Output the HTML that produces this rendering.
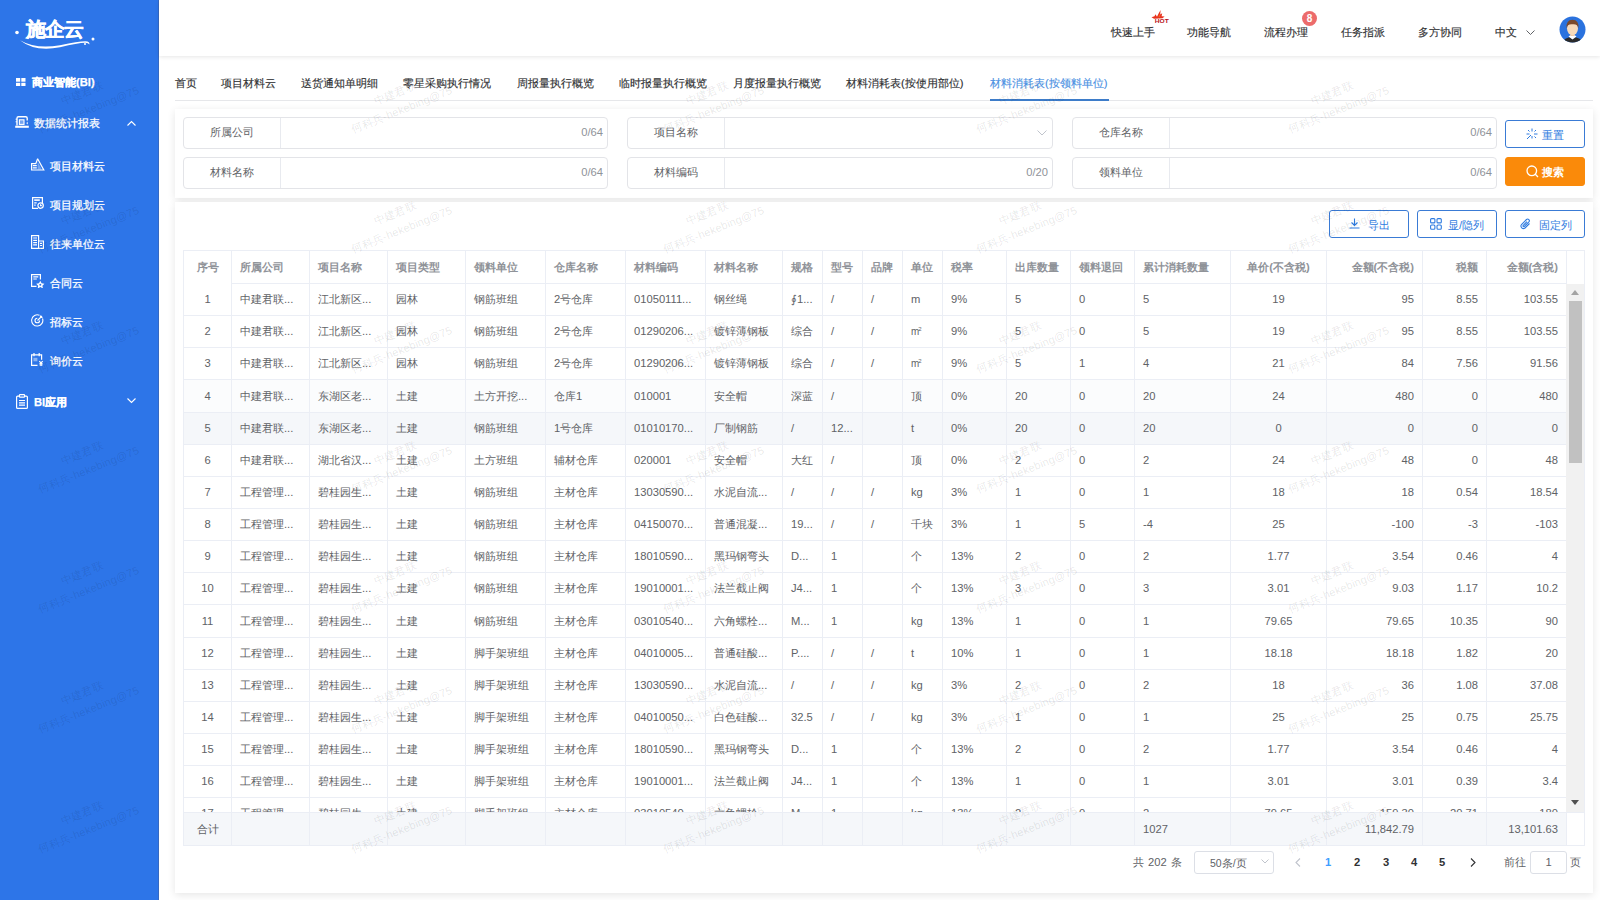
<!DOCTYPE html>
<html><head><meta charset="utf-8">
<style>
*{box-sizing:border-box;margin:0;padding:0}
html,body{width:1600px;height:900px;overflow:hidden;background:#fff;font-family:"Liberation Sans",sans-serif;font-size:11.2px;color:#606266}
.abs{position:absolute}
#side{position:absolute;left:0;top:0;width:159px;height:900px;background:#2d75e8;color:#fff;border-right:1px solid #3669c2}
.mi{position:absolute;white-space:nowrap;line-height:14px;color:#fff;font-size:11.2px;-webkit-text-stroke:0.25px #fff}
.mi svg{position:absolute}
#hdr{position:absolute;left:159px;top:0;width:1441px;height:56px;background:#fff;box-shadow:0 1px 4px rgba(0,0,0,.10);z-index:2}
.hi{position:absolute;top:25px;line-height:14px;color:#303133;white-space:nowrap;-webkit-text-stroke:0.15px currentColor}
#tabs{position:absolute;left:175px;top:64px;width:1418px;height:37px;border-bottom:1px solid #e6e7ea}
.tab{position:absolute;top:12px;line-height:14px;color:#303133;white-space:nowrap;-webkit-text-stroke:0.15px currentColor}
.card{position:absolute;left:175px;width:1418px;background:#fff;box-shadow:0 2px 8px rgba(0,0,0,.10)}
.inp{position:absolute;height:32px;border:1px solid #e3e4e8;border-radius:4px;background:#fff}
.inp .lb{position:absolute;left:0;top:0;height:30px;line-height:28px;text-align:center;color:#606266;letter-spacing:0.3px;text-indent:0.3px;border-right:1px solid #e8eaef}
.inp .ct{position:absolute;top:-0.5px;line-height:28px;color:#909399;right:4px}
.btn{position:absolute;height:28px;border:1px solid #3a7bd5;border-radius:3px;color:#2e7be0;line-height:26px;white-space:nowrap}
.btn svg{position:absolute}
.btn span{position:absolute;top:1px}
#tbl{position:absolute;left:183px;top:250px;width:1402px;height:596px;border:1px solid #ebeef5;background:#fff;overflow:hidden}
.th,.td{position:absolute;top:0;height:100%;border-right:1px solid #ebeef5;padding:0 8px;white-space:nowrap;overflow:hidden}
.th{font-weight:bold;color:#909399;line-height:32px}
.c{text-align:center}.r{text-align:right}.l{text-align:left}
#thead{position:absolute;left:0;top:0;width:1400px;height:33px;background:#fff}
#thead .th{height:33px;border-bottom:1px solid #ebeef5}
#thead .th.first{border-bottom:none}
#tbody{position:absolute;left:0;top:33px;width:1382px;height:528px;overflow:hidden}
.tr{position:absolute;left:0;width:1382px}
.tr .td{border-bottom:1px solid #ebeef5}
#tfoot{position:absolute;left:0;top:561px;width:1400px;height:33px;border-top:1px solid #ebeef5;background:#f5f7fa;line-height:32px}
#sb{position:absolute;left:1382px;top:33px;width:18px;height:528px;background:#f1f1f1}
.wm{position:absolute;width:160px;height:40px;text-align:center;font-size:11px;line-height:18px;color:rgba(0,0,0,0.1);letter-spacing:0.2px;transform:rotate(-22deg);white-space:nowrap}
#wmw{position:absolute;left:0;top:0;width:1600px;height:900px;overflow:hidden;pointer-events:none;z-index:50}
</style></head><body>

<div id="side">
  <svg class="abs" style="left:12px;top:14px" width="90" height="40" viewBox="0 0 90 40">
    <circle cx="5" cy="18.5" r="1.8" fill="#fff"/>
    <circle cx="81" cy="25" r="1.5" fill="#fff"/>
    <circle cx="73" cy="30" r="1" fill="#fff"/>
    <path d="M8 26.2 Q24 35.5 48 31.2 Q67 27.2 73.5 27.3 Q78.2 27.6 77.3 30.6 Q76.6 28.8 73.2 28.7 Q66 28.7 48 33.2 Q23 38.2 8 26.2Z" fill="#fff"/>
  </svg>
  <div class="mi" style="left:26px;top:16px;font-size:20px;line-height:26px;font-weight:bold;letter-spacing:-0.8px;-webkit-text-stroke:0.35px #fff">施企云</div>

  <svg class="abs" style="left:16px;top:77.5px" width="9.5" height="8.5" viewBox="0 0 9.5 8.5"><rect x="0" y="0" width="4.2" height="3.7" fill="#fff"/><rect x="5.3" y="0" width="4.2" height="3.7" fill="#fff"/><rect x="0" y="4.8" width="4.2" height="3.7" fill="#fff"/><rect x="5.3" y="4.8" width="4.2" height="3.7" fill="#fff"/></svg>
  <div class="mi" style="left:32px;top:75px;font-weight:bold">商业智能(BI)</div>

  <svg class="abs" style="left:15px;top:116px" width="14" height="12" viewBox="0 0 14 12" fill="none" stroke="#fff" stroke-width="1.4"><path d="M2 9.6V2.3a1.5 1.5 0 0 1 1.5-1.5h7.2a1.5 1.5 0 0 1 1.5 1.5V4.6"/><rect x="4.4" y="3.8" width="4.6" height="4.6" stroke-width="1.1" fill="rgba(255,255,255,0.35)"/><path d="M12.2 5.6Q13.6 7.4 12.2 8.6Q10.8 7.4 12.2 5.6Z" fill="#fff" stroke="none"/><rect x="0.2" y="9.7" width="13.6" height="2.1" fill="#fff" stroke="none"/><path d="M0.6 3.2h1.4M0.6 5.8h1.4" stroke-width="1"/></svg>
  <div class="mi" style="left:34px;top:116px">数据统计报表</div>
  <svg class="abs" style="left:127px;top:120px" width="9" height="6" viewBox="0 0 9 6"><path d="M0.5 5.5L4.5 1.5L8.5 5.5" stroke="#fff" stroke-width="1.1" fill="none"/></svg>

  <svg class="abs" style="left:31px;top:158px" width="14" height="13" viewBox="0 0 14 13" fill="none" stroke="#fff" stroke-width="1.2"><path d="M6.6 0.8L12.8 12H0.6V5.6h4.2L6.6 0.8"/><path d="M1.8 7.6h4M1.8 9.8h4"/><path d="M6.6 3.5L10.8 11.4H6.6Z" fill="#fff" stroke="none" opacity="0.35"/></svg>
  <div class="mi" style="left:50px;top:159px">项目材料云</div>

  <svg class="abs" style="left:32px;top:197px" width="12" height="12" viewBox="0 0 12 12" fill="none" stroke="#fff" stroke-width="1.2"><path d="M6 11.4H0.6V0.6h9.8V6"/><rect x="2.2" y="2.3" width="5.6" height="1.6" fill="#fff" stroke="none"/><path d="M2.2 5.8h2.5M2.2 8.2h1.5"/><circle cx="8.6" cy="8.6" r="2.7"/><path d="M8.6 7.3v1.4h1.2"/></svg>
  <div class="mi" style="left:50px;top:198px">项目规划云</div>

  <svg class="abs" style="left:31px;top:235px" width="13" height="14" viewBox="0 0 13 14" fill="none" stroke="#fff" stroke-width="1.2"><path d="M0.6 13.4V0.6h7v12.8"/><path d="M7.6 6h4.8v7.4H0"/><path d="M2.2 3h3.8M2.2 5.3h3.8M2.2 7.6h3.8M2.2 9.9h3.8M9 8.3h2M9 10.5h2"/></svg>
  <div class="mi" style="left:50px;top:237px">往来单位云</div>

  <svg class="abs" style="left:31px;top:274px" width="14" height="14" viewBox="0 0 14 14" fill="none" stroke="#fff" stroke-width="1.2"><path d="M5.5 12.4H0.6V0.6h8.8v5"/><path d="M2.3 2.8h5M2.3 5h3.5"/><path d="M9.3 6.8l1.3 2.5 2.8.4-2 2 .5 2.7-2.6-1.3-2.6 1.3.5-2.7-2-2 2.8-.4z" fill="#fff" stroke="none"/><circle cx="9.3" cy="10.8" r="1" fill="#2d75e8" stroke="none"/></svg>
  <div class="mi" style="left:50px;top:276px">合同云</div>

  <svg class="abs" style="left:31px;top:314px" width="13" height="13" viewBox="0 0 13 13" fill="none" stroke="#fff" stroke-width="1.1"><path d="M11.5 4.5A5.6 5.6 0 1 1 8.5 1.3"/><path d="M8.6 6.5A2.3 2.3 0 1 1 6.3 4.2"/><path d="M6.5 6.5L11 2M9.5 1.5v2h2"/></svg>
  <div class="mi" style="left:50px;top:315px">招标云</div>

  <svg class="abs" style="left:31px;top:353px" width="13" height="13" viewBox="0 0 13 13" fill="none" stroke="#fff" stroke-width="1.2"><path d="M6.5 12.4H0.6V1.8h10v5"/><path d="M3 0v3.2M8.2 0v3.2"/><rect x="2.4" y="4.8" width="4" height="3.5" fill="#fff" stroke="none" opacity="0.45"/><path d="M8.3 8.2l1.7 1.8 1.7-1.8M10 10v3M8.5 10.6h3M8.5 12h3"/></svg>
  <div class="mi" style="left:50px;top:354px">询价云</div>

  <svg class="abs" style="left:16px;top:393.5px" width="12" height="15" viewBox="0 0 12 15" fill="none" stroke="#fff" stroke-width="1.2"><path d="M3.4 2.2H1.6a1 1 0 0 0-1 1V13.4a1 1 0 0 0 1 1h8.8a1 1 0 0 0 1-1V3.2a1 1 0 0 0-1-1H8.6"/><rect x="3.4" y="0.6" width="5.2" height="2.6" rx="0.8"/><path d="M3 6.5h6M3 8.8h6M3 11.1h6"/></svg>
  <div class="mi" style="left:34px;top:395px;font-weight:bold">BI应用</div>
  <svg class="abs" style="left:127px;top:398px" width="9" height="6" viewBox="0 0 9 6"><path d="M0.5 0.5L4.5 4.5L8.5 0.5" stroke="#fff" stroke-width="1.1" fill="none"/></svg>
</div>

<div id="hdr">
  <div class="hi" style="left:952px">快速上手</div>
  <svg class="abs" style="left:992px;top:9px" width="20" height="15" viewBox="0 0 20 15"><path d="M0.5 8.3 L3.5 7.2 L4.5 5.2 L6 7.8 L7.6 4.5 L9.6 1 L9.2 5.5 L11.2 4.2 L10.6 7.2 L13.6 7.4 L11.5 9.2 L3 9.8 Z" fill="#e8321e"/><path d="M7.2 8.5 L8.8 5 L9.3 7.5 Z" fill="#f56a1a"/><text x="3.8" y="14" font-size="5.8" font-weight="bold" fill="#b8121b" font-family="Liberation Sans" textLength="14" lengthAdjust="spacingAndGlyphs">HOT</text></svg>
  <div class="hi" style="left:1028px">功能导航</div>
  <div class="hi" style="left:1105px">流程办理</div>
  <div class="abs" style="left:1143px;top:11px;width:15px;height:15px;border-radius:50%;background:#ec6b6b;color:#fff;font-size:10px;line-height:15px;text-align:center;font-weight:bold">8</div>
  <div class="hi" style="left:1182px">任务指派</div>
  <div class="hi" style="left:1259px">多方协同</div>
  <div class="hi" style="left:1336px">中文</div>
  <svg class="abs" style="left:1367px;top:30px" width="9" height="6" viewBox="0 0 9 6"><path d="M0.5 0.5L4.5 4.5L8.5 0.5" stroke="#606266" stroke-width="1" fill="none"/></svg>
  <svg class="abs" style="left:1400px;top:16px" width="27" height="27" viewBox="0 0 27 27">
    <circle cx="13.5" cy="13.5" r="13" fill="#2a72de"/>
    <clipPath id="av"><circle cx="13.5" cy="13.5" r="13"/></clipPath>
    <g clip-path="url(#av)">
      <path d="M3.5 27 Q4.5 21.5 13.5 21 Q22.5 21.5 23.5 27Z" fill="#2a2a2a"/>
      <path d="M9.5 20.6 L13.5 23.6 L17.5 20.6 L15.8 19.2 H11.2Z" fill="#fff"/>
      <rect x="11.5" y="16" width="4" height="4" fill="#f1cba6"/>
      <ellipse cx="13.5" cy="12.6" rx="5.5" ry="6.4" fill="#f7dab9"/>
      <path d="M7.6 12.5 Q6.8 3.8 13.5 3.8 Q20.2 3.8 19.4 12.5 Q18.8 7.6 13.5 8.2 Q8.2 7.6 7.6 12.5Z" fill="#7b4a2c"/>
    </g>
  </svg>
</div>

<div id="tabs">
  <div class="tab" style="left:0px">首页</div>
  <div class="tab" style="left:46px">项目材料云</div>
  <div class="tab" style="left:126px">送货通知单明细</div>
  <div class="tab" style="left:228px">零星采购执行情况</div>
  <div class="tab" style="left:342px">周报量执行概览</div>
  <div class="tab" style="left:444px">临时报量执行概览</div>
  <div class="tab" style="left:558px">月度报量执行概览</div>
  <div class="tab" style="left:671px">材料消耗表(按使用部位)</div>
  <div class="tab" style="left:815px;color:#4a90e2">材料消耗表(按领料单位)</div>
  <div class="abs" style="left:815px;top:35px;width:119px;height:2px;background:#3d7cc9"></div>
</div>

<div class="card" style="top:109px;height:89px"></div>
<div class="inp" style="left:183px;top:117px;width:425px"><div class="lb" style="width:97px">所属公司</div><div class="ct">0/64</div></div>
<div class="inp" style="left:627px;top:117px;width:426px"><div class="lb" style="width:97px">项目名称</div>
  <svg class="abs" style="left:409px;top:12px" width="10" height="6" viewBox="0 0 10 6"><path d="M0.5 0.5L5 5L9.5 0.5" stroke="#c0c4cc" stroke-width="1" fill="none"/></svg></div>
<div class="inp" style="left:1072px;top:117px;width:425px"><div class="lb" style="width:97px">仓库名称</div><div class="ct">0/64</div></div>
<div class="inp" style="left:183px;top:157px;width:425px"><div class="lb" style="width:97px">材料名称</div><div class="ct">0/64</div></div>
<div class="inp" style="left:627px;top:157px;width:426px"><div class="lb" style="width:97px">材料编码</div><div class="ct">0/20</div></div>
<div class="inp" style="left:1072px;top:157px;width:425px"><div class="lb" style="width:97px">领料单位</div><div class="ct">0/64</div></div>

<div class="btn" style="left:1505px;top:120px;width:80px">
  <svg style="left:20px;top:7px" width="12" height="12" viewBox="0 0 12 12" stroke="#2e7be0" stroke-width="1" fill="none"><path d="M6 0.5v3M6 8v2.5M8.5 3.5l1.5-1.5M1 11l4-4M8 6h3.5M0.5 6h3M8.5 8.5l1.5 1.5M2 2l1.5 1.5"/></svg>
  <span style="left:36px">重置</span>
</div>
<div class="btn" style="left:1505px;top:157px;width:80px;background:#fa8a0a;border-color:#fa8a0a;color:#fff;font-weight:bold;height:29px">
  <svg style="left:20px;top:7px" width="13" height="13" viewBox="0 0 13 13" stroke="#fff" stroke-width="1.3" fill="none"><circle cx="5.8" cy="5.8" r="4.8"/><path d="M9.3 9.3L12 12"/></svg>
  <span style="left:36px">搜索</span>
</div>

<div class="card" style="top:202px;height:691px"></div>
<div class="btn" style="left:1329px;top:210px;width:80px">
  <svg style="left:19px;top:7px" width="11" height="11" viewBox="0 0 11 11" stroke="#2e7be0" stroke-width="1.1" fill="none"><path d="M5.5 0.5v7M2.5 4.5l3 3 3-3M0.5 10h10"/></svg>
  <span style="left:38px">导出</span>
</div>
<div class="btn" style="left:1417px;top:210px;width:80px">
  <svg style="left:12px;top:7px" width="12" height="12" viewBox="0 0 12 12" stroke="#2e7be0" stroke-width="1.1" fill="none"><rect x="0.6" y="0.6" width="4.3" height="4.3" rx="1"/><rect x="7" y="0.6" width="4.3" height="4.3" rx="1"/><rect x="0.6" y="7" width="4.3" height="4.3" rx="1"/><rect x="7" y="7" width="4.3" height="4.3" rx="1"/></svg>
  <span style="left:30px">显/隐列</span>
</div>
<div class="btn" style="left:1505px;top:210px;width:80px">
  <svg style="left:14px;top:7px" width="12" height="12" viewBox="0 0 12 12" stroke="#2e7be0" stroke-width="1.1" fill="none"><path d="M9.5 5.5L5 10a2.5 2.5 0 0 1-3.5-3.5L6.5 1.5a1.7 1.7 0 0 1 2.4 2.4L4.2 8.6a0.8 0.8 0 0 1-1.1-1.1L7 3.6"/></svg>
  <span style="left:33px">固定列</span>
</div>

<div id="tbl">
  <div id="thead"><div class="th c first" style="left:0px;width:48px">序号</div><div class="th l" style="left:48px;width:78px">所属公司</div><div class="th l" style="left:126px;width:78px">项目名称</div><div class="th l" style="left:204px;width:78px">项目类型</div><div class="th l" style="left:282px;width:80px">领料单位</div><div class="th l" style="left:362px;width:80px">仓库名称</div><div class="th l" style="left:442px;width:80px">材料编码</div><div class="th l" style="left:522px;width:77px">材料名称</div><div class="th l" style="left:599px;width:40px">规格</div><div class="th l" style="left:639px;width:40px">型号</div><div class="th l" style="left:679px;width:40px">品牌</div><div class="th l" style="left:719px;width:40px">单位</div><div class="th l" style="left:759px;width:64px">税率</div><div class="th l" style="left:823px;width:64px">出库数量</div><div class="th l" style="left:887px;width:64px">领料退回</div><div class="th l" style="left:951px;width:96px">累计消耗数量</div><div class="th c" style="left:1047px;width:96px">单价(不含税)</div><div class="th r" style="left:1143px;width:96px">金额(不含税)</div><div class="th r" style="left:1239px;width:64px">税额</div><div class="th r" style="left:1303px;width:80px">金额(含税)</div></div>
  <div id="tbody"><div class="tr" style="top:0px;height:32px;line-height:31px;"><div class="td c" style="left:0px;width:48px">1</div><div class="td l" style="left:48px;width:78px">中建君联...</div><div class="td l" style="left:126px;width:78px">江北新区...</div><div class="td l" style="left:204px;width:78px">园林</div><div class="td l" style="left:282px;width:80px">钢筋班组</div><div class="td l" style="left:362px;width:80px">2号仓库</div><div class="td l" style="left:442px;width:80px">01050111...</div><div class="td l" style="left:522px;width:77px">钢丝绳</div><div class="td l" style="left:599px;width:40px">∮1...</div><div class="td l" style="left:639px;width:40px">/</div><div class="td l" style="left:679px;width:40px">/</div><div class="td l" style="left:719px;width:40px">m</div><div class="td l" style="left:759px;width:64px">9%</div><div class="td l" style="left:823px;width:64px">5</div><div class="td l" style="left:887px;width:64px">0</div><div class="td l" style="left:951px;width:96px">5</div><div class="td c" style="left:1047px;width:96px">19</div><div class="td r" style="left:1143px;width:96px">95</div><div class="td r" style="left:1239px;width:64px">8.55</div><div class="td r" style="left:1303px;width:80px">103.55</div></div>
<div class="tr" style="top:32px;height:32px;line-height:31px;"><div class="td c" style="left:0px;width:48px">2</div><div class="td l" style="left:48px;width:78px">中建君联...</div><div class="td l" style="left:126px;width:78px">江北新区...</div><div class="td l" style="left:204px;width:78px">园林</div><div class="td l" style="left:282px;width:80px">钢筋班组</div><div class="td l" style="left:362px;width:80px">2号仓库</div><div class="td l" style="left:442px;width:80px">01290206...</div><div class="td l" style="left:522px;width:77px">镀锌薄钢板</div><div class="td l" style="left:599px;width:40px">综合</div><div class="td l" style="left:639px;width:40px">/</div><div class="td l" style="left:679px;width:40px">/</div><div class="td l" style="left:719px;width:40px"><span style="display:inline-block;transform:scaleX(.88);transform-origin:left">m</span><span style="font-size:6px;position:relative;top:-4px;margin-left:-2px">2</span></div><div class="td l" style="left:759px;width:64px">9%</div><div class="td l" style="left:823px;width:64px">5</div><div class="td l" style="left:887px;width:64px">0</div><div class="td l" style="left:951px;width:96px">5</div><div class="td c" style="left:1047px;width:96px">19</div><div class="td r" style="left:1143px;width:96px">95</div><div class="td r" style="left:1239px;width:64px">8.55</div><div class="td r" style="left:1303px;width:80px">103.55</div></div>
<div class="tr" style="top:64px;height:32px;line-height:31px;"><div class="td c" style="left:0px;width:48px">3</div><div class="td l" style="left:48px;width:78px">中建君联...</div><div class="td l" style="left:126px;width:78px">江北新区...</div><div class="td l" style="left:204px;width:78px">园林</div><div class="td l" style="left:282px;width:80px">钢筋班组</div><div class="td l" style="left:362px;width:80px">2号仓库</div><div class="td l" style="left:442px;width:80px">01290206...</div><div class="td l" style="left:522px;width:77px">镀锌薄钢板</div><div class="td l" style="left:599px;width:40px">综合</div><div class="td l" style="left:639px;width:40px">/</div><div class="td l" style="left:679px;width:40px">/</div><div class="td l" style="left:719px;width:40px"><span style="display:inline-block;transform:scaleX(.88);transform-origin:left">m</span><span style="font-size:6px;position:relative;top:-4px;margin-left:-2px">2</span></div><div class="td l" style="left:759px;width:64px">9%</div><div class="td l" style="left:823px;width:64px">5</div><div class="td l" style="left:887px;width:64px">1</div><div class="td l" style="left:951px;width:96px">4</div><div class="td c" style="left:1047px;width:96px">21</div><div class="td r" style="left:1143px;width:96px">84</div><div class="td r" style="left:1239px;width:64px">7.56</div><div class="td r" style="left:1303px;width:80px">91.56</div></div>
<div class="tr" style="top:96px;height:33px;line-height:32px;background:#fbfcfd;"><div class="td c" style="left:0px;width:48px">4</div><div class="td l" style="left:48px;width:78px">中建君联...</div><div class="td l" style="left:126px;width:78px">东湖区老...</div><div class="td l" style="left:204px;width:78px">土建</div><div class="td l" style="left:282px;width:80px">土方开挖...</div><div class="td l" style="left:362px;width:80px">仓库1</div><div class="td l" style="left:442px;width:80px">010001</div><div class="td l" style="left:522px;width:77px">安全帽</div><div class="td l" style="left:599px;width:40px">深蓝</div><div class="td l" style="left:639px;width:40px">/</div><div class="td l" style="left:679px;width:40px"></div><div class="td l" style="left:719px;width:40px">顶</div><div class="td l" style="left:759px;width:64px">0%</div><div class="td l" style="left:823px;width:64px">20</div><div class="td l" style="left:887px;width:64px">0</div><div class="td l" style="left:951px;width:96px">20</div><div class="td c" style="left:1047px;width:96px">24</div><div class="td r" style="left:1143px;width:96px">480</div><div class="td r" style="left:1239px;width:64px">0</div><div class="td r" style="left:1303px;width:80px">480</div></div>
<div class="tr" style="top:129px;height:32px;line-height:31px;background:#f5f7fa;"><div class="td c" style="left:0px;width:48px">5</div><div class="td l" style="left:48px;width:78px">中建君联...</div><div class="td l" style="left:126px;width:78px">东湖区老...</div><div class="td l" style="left:204px;width:78px">土建</div><div class="td l" style="left:282px;width:80px">钢筋班组</div><div class="td l" style="left:362px;width:80px">1号仓库</div><div class="td l" style="left:442px;width:80px">01010170...</div><div class="td l" style="left:522px;width:77px">厂制钢筋</div><div class="td l" style="left:599px;width:40px">/</div><div class="td l" style="left:639px;width:40px">12...</div><div class="td l" style="left:679px;width:40px"></div><div class="td l" style="left:719px;width:40px">t</div><div class="td l" style="left:759px;width:64px">0%</div><div class="td l" style="left:823px;width:64px">20</div><div class="td l" style="left:887px;width:64px">0</div><div class="td l" style="left:951px;width:96px">20</div><div class="td c" style="left:1047px;width:96px">0</div><div class="td r" style="left:1143px;width:96px">0</div><div class="td r" style="left:1239px;width:64px">0</div><div class="td r" style="left:1303px;width:80px">0</div></div>
<div class="tr" style="top:161px;height:32px;line-height:31px;"><div class="td c" style="left:0px;width:48px">6</div><div class="td l" style="left:48px;width:78px">中建君联...</div><div class="td l" style="left:126px;width:78px">湖北省汉...</div><div class="td l" style="left:204px;width:78px">土建</div><div class="td l" style="left:282px;width:80px">土方班组</div><div class="td l" style="left:362px;width:80px">辅材仓库</div><div class="td l" style="left:442px;width:80px">020001</div><div class="td l" style="left:522px;width:77px">安全帽</div><div class="td l" style="left:599px;width:40px">大红</div><div class="td l" style="left:639px;width:40px">/</div><div class="td l" style="left:679px;width:40px"></div><div class="td l" style="left:719px;width:40px">顶</div><div class="td l" style="left:759px;width:64px">0%</div><div class="td l" style="left:823px;width:64px">2</div><div class="td l" style="left:887px;width:64px">0</div><div class="td l" style="left:951px;width:96px">2</div><div class="td c" style="left:1047px;width:96px">24</div><div class="td r" style="left:1143px;width:96px">48</div><div class="td r" style="left:1239px;width:64px">0</div><div class="td r" style="left:1303px;width:80px">48</div></div>
<div class="tr" style="top:193px;height:32px;line-height:31px;"><div class="td c" style="left:0px;width:48px">7</div><div class="td l" style="left:48px;width:78px">工程管理...</div><div class="td l" style="left:126px;width:78px">碧桂园生...</div><div class="td l" style="left:204px;width:78px">土建</div><div class="td l" style="left:282px;width:80px">钢筋班组</div><div class="td l" style="left:362px;width:80px">主材仓库</div><div class="td l" style="left:442px;width:80px">13030590...</div><div class="td l" style="left:522px;width:77px">水泥自流...</div><div class="td l" style="left:599px;width:40px">/</div><div class="td l" style="left:639px;width:40px">/</div><div class="td l" style="left:679px;width:40px">/</div><div class="td l" style="left:719px;width:40px">kg</div><div class="td l" style="left:759px;width:64px">3%</div><div class="td l" style="left:823px;width:64px">1</div><div class="td l" style="left:887px;width:64px">0</div><div class="td l" style="left:951px;width:96px">1</div><div class="td c" style="left:1047px;width:96px">18</div><div class="td r" style="left:1143px;width:96px">18</div><div class="td r" style="left:1239px;width:64px">0.54</div><div class="td r" style="left:1303px;width:80px">18.54</div></div>
<div class="tr" style="top:225px;height:32px;line-height:31px;"><div class="td c" style="left:0px;width:48px">8</div><div class="td l" style="left:48px;width:78px">工程管理...</div><div class="td l" style="left:126px;width:78px">碧桂园生...</div><div class="td l" style="left:204px;width:78px">土建</div><div class="td l" style="left:282px;width:80px">钢筋班组</div><div class="td l" style="left:362px;width:80px">主材仓库</div><div class="td l" style="left:442px;width:80px">04150070...</div><div class="td l" style="left:522px;width:77px">普通混凝...</div><div class="td l" style="left:599px;width:40px">19...</div><div class="td l" style="left:639px;width:40px">/</div><div class="td l" style="left:679px;width:40px">/</div><div class="td l" style="left:719px;width:40px">千块</div><div class="td l" style="left:759px;width:64px">3%</div><div class="td l" style="left:823px;width:64px">1</div><div class="td l" style="left:887px;width:64px">5</div><div class="td l" style="left:951px;width:96px">-4</div><div class="td c" style="left:1047px;width:96px">25</div><div class="td r" style="left:1143px;width:96px">-100</div><div class="td r" style="left:1239px;width:64px">-3</div><div class="td r" style="left:1303px;width:80px">-103</div></div>
<div class="tr" style="top:257px;height:32px;line-height:31px;"><div class="td c" style="left:0px;width:48px">9</div><div class="td l" style="left:48px;width:78px">工程管理...</div><div class="td l" style="left:126px;width:78px">碧桂园生...</div><div class="td l" style="left:204px;width:78px">土建</div><div class="td l" style="left:282px;width:80px">钢筋班组</div><div class="td l" style="left:362px;width:80px">主材仓库</div><div class="td l" style="left:442px;width:80px">18010590...</div><div class="td l" style="left:522px;width:77px">黑玛钢弯头</div><div class="td l" style="left:599px;width:40px">D...</div><div class="td l" style="left:639px;width:40px">1</div><div class="td l" style="left:679px;width:40px"></div><div class="td l" style="left:719px;width:40px">个</div><div class="td l" style="left:759px;width:64px">13%</div><div class="td l" style="left:823px;width:64px">2</div><div class="td l" style="left:887px;width:64px">0</div><div class="td l" style="left:951px;width:96px">2</div><div class="td c" style="left:1047px;width:96px">1.77</div><div class="td r" style="left:1143px;width:96px">3.54</div><div class="td r" style="left:1239px;width:64px">0.46</div><div class="td r" style="left:1303px;width:80px">4</div></div>
<div class="tr" style="top:289px;height:32px;line-height:31px;"><div class="td c" style="left:0px;width:48px">10</div><div class="td l" style="left:48px;width:78px">工程管理...</div><div class="td l" style="left:126px;width:78px">碧桂园生...</div><div class="td l" style="left:204px;width:78px">土建</div><div class="td l" style="left:282px;width:80px">钢筋班组</div><div class="td l" style="left:362px;width:80px">主材仓库</div><div class="td l" style="left:442px;width:80px">19010001...</div><div class="td l" style="left:522px;width:77px">法兰截止阀</div><div class="td l" style="left:599px;width:40px">J4...</div><div class="td l" style="left:639px;width:40px">1</div><div class="td l" style="left:679px;width:40px"></div><div class="td l" style="left:719px;width:40px">个</div><div class="td l" style="left:759px;width:64px">13%</div><div class="td l" style="left:823px;width:64px">3</div><div class="td l" style="left:887px;width:64px">0</div><div class="td l" style="left:951px;width:96px">3</div><div class="td c" style="left:1047px;width:96px">3.01</div><div class="td r" style="left:1143px;width:96px">9.03</div><div class="td r" style="left:1239px;width:64px">1.17</div><div class="td r" style="left:1303px;width:80px">10.2</div></div>
<div class="tr" style="top:321px;height:33px;line-height:32px;"><div class="td c" style="left:0px;width:48px">11</div><div class="td l" style="left:48px;width:78px">工程管理...</div><div class="td l" style="left:126px;width:78px">碧桂园生...</div><div class="td l" style="left:204px;width:78px">土建</div><div class="td l" style="left:282px;width:80px">钢筋班组</div><div class="td l" style="left:362px;width:80px">主材仓库</div><div class="td l" style="left:442px;width:80px">03010540...</div><div class="td l" style="left:522px;width:77px">六角螺栓...</div><div class="td l" style="left:599px;width:40px">M...</div><div class="td l" style="left:639px;width:40px">1</div><div class="td l" style="left:679px;width:40px"></div><div class="td l" style="left:719px;width:40px">kg</div><div class="td l" style="left:759px;width:64px">13%</div><div class="td l" style="left:823px;width:64px">1</div><div class="td l" style="left:887px;width:64px">0</div><div class="td l" style="left:951px;width:96px">1</div><div class="td c" style="left:1047px;width:96px">79.65</div><div class="td r" style="left:1143px;width:96px">79.65</div><div class="td r" style="left:1239px;width:64px">10.35</div><div class="td r" style="left:1303px;width:80px">90</div></div>
<div class="tr" style="top:354px;height:32px;line-height:31px;"><div class="td c" style="left:0px;width:48px">12</div><div class="td l" style="left:48px;width:78px">工程管理...</div><div class="td l" style="left:126px;width:78px">碧桂园生...</div><div class="td l" style="left:204px;width:78px">土建</div><div class="td l" style="left:282px;width:80px">脚手架班组</div><div class="td l" style="left:362px;width:80px">主材仓库</div><div class="td l" style="left:442px;width:80px">04010005...</div><div class="td l" style="left:522px;width:77px">普通硅酸...</div><div class="td l" style="left:599px;width:40px">P....</div><div class="td l" style="left:639px;width:40px">/</div><div class="td l" style="left:679px;width:40px">/</div><div class="td l" style="left:719px;width:40px">t</div><div class="td l" style="left:759px;width:64px">10%</div><div class="td l" style="left:823px;width:64px">1</div><div class="td l" style="left:887px;width:64px">0</div><div class="td l" style="left:951px;width:96px">1</div><div class="td c" style="left:1047px;width:96px">18.18</div><div class="td r" style="left:1143px;width:96px">18.18</div><div class="td r" style="left:1239px;width:64px">1.82</div><div class="td r" style="left:1303px;width:80px">20</div></div>
<div class="tr" style="top:386px;height:32px;line-height:31px;"><div class="td c" style="left:0px;width:48px">13</div><div class="td l" style="left:48px;width:78px">工程管理...</div><div class="td l" style="left:126px;width:78px">碧桂园生...</div><div class="td l" style="left:204px;width:78px">土建</div><div class="td l" style="left:282px;width:80px">脚手架班组</div><div class="td l" style="left:362px;width:80px">主材仓库</div><div class="td l" style="left:442px;width:80px">13030590...</div><div class="td l" style="left:522px;width:77px">水泥自流...</div><div class="td l" style="left:599px;width:40px">/</div><div class="td l" style="left:639px;width:40px">/</div><div class="td l" style="left:679px;width:40px">/</div><div class="td l" style="left:719px;width:40px">kg</div><div class="td l" style="left:759px;width:64px">3%</div><div class="td l" style="left:823px;width:64px">2</div><div class="td l" style="left:887px;width:64px">0</div><div class="td l" style="left:951px;width:96px">2</div><div class="td c" style="left:1047px;width:96px">18</div><div class="td r" style="left:1143px;width:96px">36</div><div class="td r" style="left:1239px;width:64px">1.08</div><div class="td r" style="left:1303px;width:80px">37.08</div></div>
<div class="tr" style="top:418px;height:32px;line-height:31px;"><div class="td c" style="left:0px;width:48px">14</div><div class="td l" style="left:48px;width:78px">工程管理...</div><div class="td l" style="left:126px;width:78px">碧桂园生...</div><div class="td l" style="left:204px;width:78px">土建</div><div class="td l" style="left:282px;width:80px">脚手架班组</div><div class="td l" style="left:362px;width:80px">主材仓库</div><div class="td l" style="left:442px;width:80px">04010050...</div><div class="td l" style="left:522px;width:77px">白色硅酸...</div><div class="td l" style="left:599px;width:40px">32.5</div><div class="td l" style="left:639px;width:40px">/</div><div class="td l" style="left:679px;width:40px">/</div><div class="td l" style="left:719px;width:40px">kg</div><div class="td l" style="left:759px;width:64px">3%</div><div class="td l" style="left:823px;width:64px">1</div><div class="td l" style="left:887px;width:64px">0</div><div class="td l" style="left:951px;width:96px">1</div><div class="td c" style="left:1047px;width:96px">25</div><div class="td r" style="left:1143px;width:96px">25</div><div class="td r" style="left:1239px;width:64px">0.75</div><div class="td r" style="left:1303px;width:80px">25.75</div></div>
<div class="tr" style="top:450px;height:32px;line-height:31px;"><div class="td c" style="left:0px;width:48px">15</div><div class="td l" style="left:48px;width:78px">工程管理...</div><div class="td l" style="left:126px;width:78px">碧桂园生...</div><div class="td l" style="left:204px;width:78px">土建</div><div class="td l" style="left:282px;width:80px">脚手架班组</div><div class="td l" style="left:362px;width:80px">主材仓库</div><div class="td l" style="left:442px;width:80px">18010590...</div><div class="td l" style="left:522px;width:77px">黑玛钢弯头</div><div class="td l" style="left:599px;width:40px">D...</div><div class="td l" style="left:639px;width:40px">1</div><div class="td l" style="left:679px;width:40px"></div><div class="td l" style="left:719px;width:40px">个</div><div class="td l" style="left:759px;width:64px">13%</div><div class="td l" style="left:823px;width:64px">2</div><div class="td l" style="left:887px;width:64px">0</div><div class="td l" style="left:951px;width:96px">2</div><div class="td c" style="left:1047px;width:96px">1.77</div><div class="td r" style="left:1143px;width:96px">3.54</div><div class="td r" style="left:1239px;width:64px">0.46</div><div class="td r" style="left:1303px;width:80px">4</div></div>
<div class="tr" style="top:482px;height:32px;line-height:31px;"><div class="td c" style="left:0px;width:48px">16</div><div class="td l" style="left:48px;width:78px">工程管理...</div><div class="td l" style="left:126px;width:78px">碧桂园生...</div><div class="td l" style="left:204px;width:78px">土建</div><div class="td l" style="left:282px;width:80px">脚手架班组</div><div class="td l" style="left:362px;width:80px">主材仓库</div><div class="td l" style="left:442px;width:80px">19010001...</div><div class="td l" style="left:522px;width:77px">法兰截止阀</div><div class="td l" style="left:599px;width:40px">J4...</div><div class="td l" style="left:639px;width:40px">1</div><div class="td l" style="left:679px;width:40px"></div><div class="td l" style="left:719px;width:40px">个</div><div class="td l" style="left:759px;width:64px">13%</div><div class="td l" style="left:823px;width:64px">1</div><div class="td l" style="left:887px;width:64px">0</div><div class="td l" style="left:951px;width:96px">1</div><div class="td c" style="left:1047px;width:96px">3.01</div><div class="td r" style="left:1143px;width:96px">3.01</div><div class="td r" style="left:1239px;width:64px">0.39</div><div class="td r" style="left:1303px;width:80px">3.4</div></div>
<div class="tr" style="top:514px;height:32px;line-height:31px;"><div class="td c" style="left:0px;width:48px">17</div><div class="td l" style="left:48px;width:78px">工程管理...</div><div class="td l" style="left:126px;width:78px">碧桂园生...</div><div class="td l" style="left:204px;width:78px">土建</div><div class="td l" style="left:282px;width:80px">脚手架班组</div><div class="td l" style="left:362px;width:80px">主材仓库</div><div class="td l" style="left:442px;width:80px">03010540...</div><div class="td l" style="left:522px;width:77px">六角螺栓...</div><div class="td l" style="left:599px;width:40px">M...</div><div class="td l" style="left:639px;width:40px">1</div><div class="td l" style="left:679px;width:40px"></div><div class="td l" style="left:719px;width:40px">kg</div><div class="td l" style="left:759px;width:64px">13%</div><div class="td l" style="left:823px;width:64px">2</div><div class="td l" style="left:887px;width:64px">0</div><div class="td l" style="left:951px;width:96px">2</div><div class="td c" style="left:1047px;width:96px">79.65</div><div class="td r" style="left:1143px;width:96px">159.30</div><div class="td r" style="left:1239px;width:64px">20.71</div><div class="td r" style="left:1303px;width:80px">180</div></div></div>
  <div id="sb">
    <svg class="abs" style="left:5px;top:6px" width="8" height="5" viewBox="0 0 8 5"><path d="M0 5L4 0L8 5Z" fill="#a3a3a3"/></svg>
    <div class="abs" style="left:3px;top:17px;width:13px;height:162px;background:#c1c1c1"></div>
    <svg class="abs" style="left:5px;top:516px" width="8" height="5" viewBox="0 0 8 5"><path d="M0 0L4 5L8 0Z" fill="#505050"/></svg>
  </div>
  <div id="tfoot"><div class="td c" style="left:0px;width:48px">合计</div><div class="td l" style="left:48px;width:78px"></div><div class="td l" style="left:126px;width:78px"></div><div class="td l" style="left:204px;width:78px"></div><div class="td l" style="left:282px;width:80px"></div><div class="td l" style="left:362px;width:80px"></div><div class="td l" style="left:442px;width:80px"></div><div class="td l" style="left:522px;width:77px"></div><div class="td l" style="left:599px;width:40px"></div><div class="td l" style="left:639px;width:40px"></div><div class="td l" style="left:679px;width:40px"></div><div class="td l" style="left:719px;width:40px"></div><div class="td l" style="left:759px;width:64px"></div><div class="td l" style="left:823px;width:64px"></div><div class="td l" style="left:887px;width:64px"></div><div class="td l" style="left:951px;width:96px">1027</div><div class="td c" style="left:1047px;width:96px"></div><div class="td r" style="left:1143px;width:96px">11,842.79</div><div class="td r" style="left:1239px;width:64px"></div><div class="td r" style="left:1303px;width:80px">13,101.63</div><div class="abs" style="left:1383px;top:0;width:17px;height:32px;background:#fff"></div></div>
</div>

<div class="abs" style="left:1133px;top:855px;line-height:14px;color:#606266;word-spacing:1px">共 202 条</div>
<div class="abs" style="left:1194px;top:851px;width:80px;height:23px;border:1px solid #dcdfe6;border-radius:3px;">
  <div class="abs" style="left:15px;top:4px;line-height:14px;color:#606266;font-size:10.5px">50条/页</div>
  <svg class="abs" style="left:66px;top:7px" width="8" height="5" viewBox="0 0 8 5"><path d="M0.5 0.5L4 4L7.5 0.5" stroke="#c0c4cc" stroke-width="1" fill="none"/></svg>
</div>
<svg class="abs" style="left:1295px;top:858px" width="6" height="9" viewBox="0 0 6 9"><path d="M5 0.5L1 4.5L5 8.5" stroke="#c0c4cc" stroke-width="1.1" fill="none"/></svg>
<div class="abs" style="left:1325px;top:855px;line-height:14px;color:#409eff;font-weight:bold">1</div>
<div class="abs" style="left:1354px;top:855px;line-height:14px;color:#303133;font-weight:bold">2</div>
<div class="abs" style="left:1383px;top:855px;line-height:14px;color:#303133;font-weight:bold">3</div>
<div class="abs" style="left:1411px;top:855px;line-height:14px;color:#303133;font-weight:bold">4</div>
<div class="abs" style="left:1439px;top:855px;line-height:14px;color:#303133;font-weight:bold">5</div>
<svg class="abs" style="left:1470px;top:858px" width="6" height="9" viewBox="0 0 6 9"><path d="M1 0.5L5 4.5L1 8.5" stroke="#303133" stroke-width="1.1" fill="none"/></svg>
<div class="abs" style="left:1504px;top:855px;line-height:14px;color:#606266">前往</div>
<div class="abs" style="left:1530px;top:851px;width:37px;height:23px;border:1px solid #dcdfe6;border-radius:3px;text-align:center;line-height:21px;color:#606266">1</div>
<div class="abs" style="left:1570px;top:855px;line-height:14px;color:#606266">页</div>
<div id="wmw"><div class="wm" style="left:6px;top:82.5px"><div>中建君联</div><div>何科兵-hekebing@75</div></div><div class="wm" style="left:6px;top:202.6px"><div>中建君联</div><div>何科兵-hekebing@75</div></div><div class="wm" style="left:6px;top:322.7px"><div>中建君联</div><div>何科兵-hekebing@75</div></div><div class="wm" style="left:6px;top:442.8px"><div>中建君联</div><div>何科兵-hekebing@75</div></div><div class="wm" style="left:6px;top:562.9px"><div>中建君联</div><div>何科兵-hekebing@75</div></div><div class="wm" style="left:6px;top:683px"><div>中建君联</div><div>何科兵-hekebing@75</div></div><div class="wm" style="left:6px;top:803px"><div>中建君联</div><div>何科兵-hekebing@75</div></div><div class="wm" style="left:318.5px;top:82.5px"><div>中建君联</div><div>何科兵-hekebing@75</div></div><div class="wm" style="left:318.5px;top:202.6px"><div>中建君联</div><div>何科兵-hekebing@75</div></div><div class="wm" style="left:318.5px;top:322.7px"><div>中建君联</div><div>何科兵-hekebing@75</div></div><div class="wm" style="left:318.5px;top:442.8px"><div>中建君联</div><div>何科兵-hekebing@75</div></div><div class="wm" style="left:318.5px;top:562.9px"><div>中建君联</div><div>何科兵-hekebing@75</div></div><div class="wm" style="left:318.5px;top:683px"><div>中建君联</div><div>何科兵-hekebing@75</div></div><div class="wm" style="left:318.5px;top:803px"><div>中建君联</div><div>何科兵-hekebing@75</div></div><div class="wm" style="left:631px;top:82.5px"><div>中建君联</div><div>何科兵-hekebing@75</div></div><div class="wm" style="left:631px;top:202.6px"><div>中建君联</div><div>何科兵-hekebing@75</div></div><div class="wm" style="left:631px;top:322.7px"><div>中建君联</div><div>何科兵-hekebing@75</div></div><div class="wm" style="left:631px;top:442.8px"><div>中建君联</div><div>何科兵-hekebing@75</div></div><div class="wm" style="left:631px;top:562.9px"><div>中建君联</div><div>何科兵-hekebing@75</div></div><div class="wm" style="left:631px;top:683px"><div>中建君联</div><div>何科兵-hekebing@75</div></div><div class="wm" style="left:631px;top:803px"><div>中建君联</div><div>何科兵-hekebing@75</div></div><div class="wm" style="left:943.5px;top:82.5px"><div>中建君联</div><div>何科兵-hekebing@75</div></div><div class="wm" style="left:943.5px;top:202.6px"><div>中建君联</div><div>何科兵-hekebing@75</div></div><div class="wm" style="left:943.5px;top:322.7px"><div>中建君联</div><div>何科兵-hekebing@75</div></div><div class="wm" style="left:943.5px;top:442.8px"><div>中建君联</div><div>何科兵-hekebing@75</div></div><div class="wm" style="left:943.5px;top:562.9px"><div>中建君联</div><div>何科兵-hekebing@75</div></div><div class="wm" style="left:943.5px;top:683px"><div>中建君联</div><div>何科兵-hekebing@75</div></div><div class="wm" style="left:943.5px;top:803px"><div>中建君联</div><div>何科兵-hekebing@75</div></div><div class="wm" style="left:1256px;top:82.5px"><div>中建君联</div><div>何科兵-hekebing@75</div></div><div class="wm" style="left:1256px;top:202.6px"><div>中建君联</div><div>何科兵-hekebing@75</div></div><div class="wm" style="left:1256px;top:322.7px"><div>中建君联</div><div>何科兵-hekebing@75</div></div><div class="wm" style="left:1256px;top:442.8px"><div>中建君联</div><div>何科兵-hekebing@75</div></div><div class="wm" style="left:1256px;top:562.9px"><div>中建君联</div><div>何科兵-hekebing@75</div></div><div class="wm" style="left:1256px;top:683px"><div>中建君联</div><div>何科兵-hekebing@75</div></div><div class="wm" style="left:1256px;top:803px"><div>中建君联</div><div>何科兵-hekebing@75</div></div></div>
</body></html>
